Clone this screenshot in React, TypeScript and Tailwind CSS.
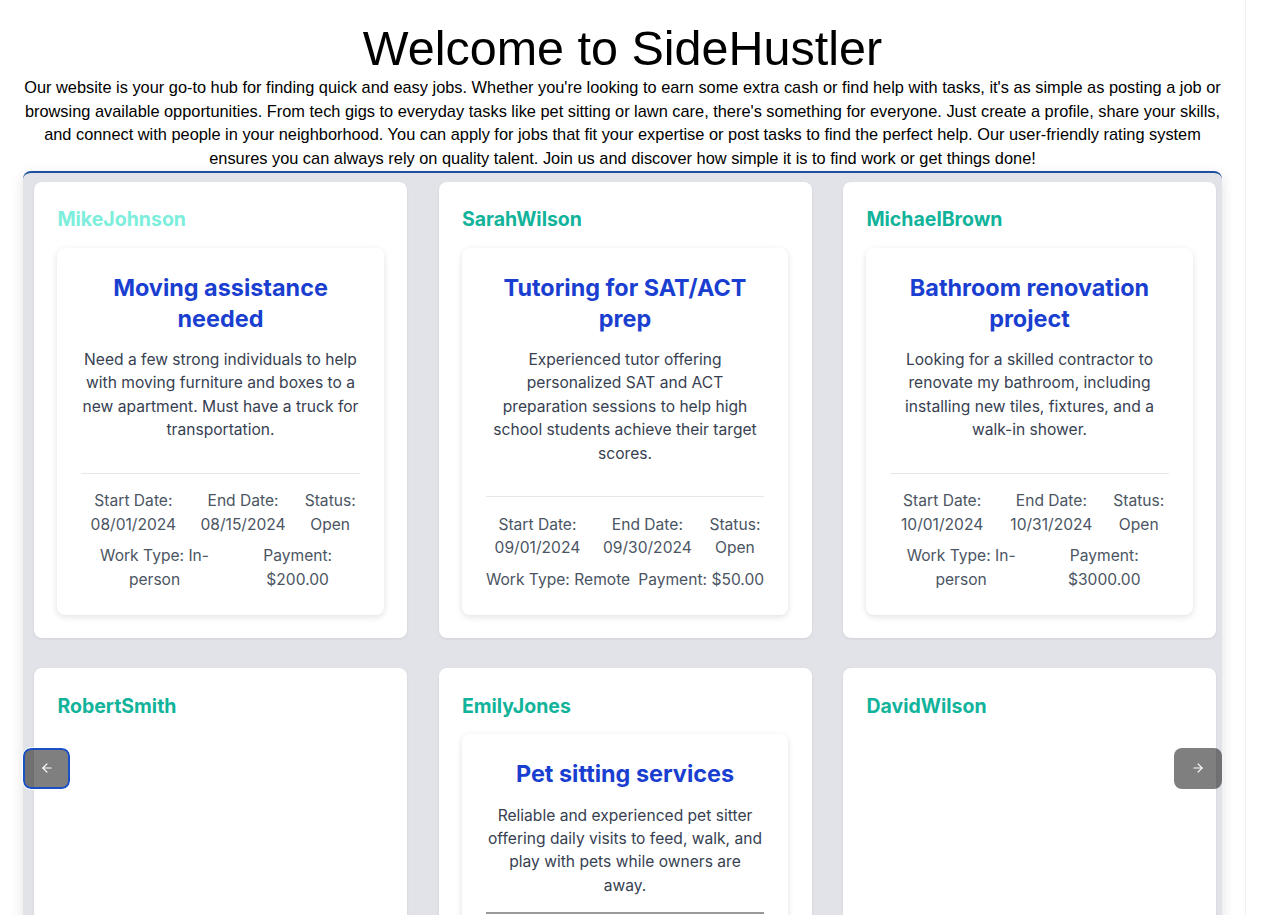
import { ArrowLeft, ArrowRight } from "lucide-react";

type Job = {
  title: string;
  description: string;
  startDate: string;
  endDate: string;
  status: string;
  workType: string;
  payment: string;
};

type Poster = {
  username: string;
  job?: Job;
  highlight?: boolean;
};

const posters: Poster[] = [
  {
    username: "MikeJohnson",
    highlight: true,
    job: {
      title: "Moving assistance needed",
      description:
        "Need a few strong individuals to help with moving furniture and boxes to a new apartment. Must have a truck for transportation.",
      startDate: "08/01/2024",
      endDate: "08/15/2024",
      status: "Open",
      workType: "In-person",
      payment: "$200.00",
    },
  },
  {
    username: "SarahWilson",
    job: {
      title: "Tutoring for SAT/ACT prep",
      description:
        "Experienced tutor offering personalized SAT and ACT preparation sessions to help high school students achieve their target scores.",
      startDate: "09/01/2024",
      endDate: "09/30/2024",
      status: "Open",
      workType: "Remote",
      payment: "$50.00",
    },
  },
  {
    username: "MichaelBrown",
    job: {
      title: "Bathroom renovation project",
      description:
        "Looking for a skilled contractor to renovate my bathroom, including installing new tiles, fixtures, and a walk-in shower.",
      startDate: "10/01/2024",
      endDate: "10/31/2024",
      status: "Open",
      workType: "In-person",
      payment: "$3000.00",
    },
  },
  { username: "RobertSmith" },
  {
    username: "EmilyJones",
    job: {
      title: "Pet sitting services",
      description:
        "Reliable and experienced pet sitter offering daily visits to feed, walk, and play with pets while owners are away.",
      startDate: "08/10/2024",
      endDate: "08/20/2024",
      status: "Open",
      workType: "In-person",
      payment: "$25.00",
    },
  },
  { username: "DavidWilson" },
];

function JobCard({ job, dark }: { job: Job; dark?: boolean }) {
  return (
    <div className="bg-white rounded-lg shadow-[0_2px_6px_rgba(0,0,0,0.12)] p-6 text-center">
      <h3 className="text-[23.4px] leading-[31.2px] font-bold text-[#1a3fd0] mb-[14px]">
        {job.title}
      </h3>
      <p
        className={`text-[15.6px] leading-[23.4px] text-[#374151] ${
          dark ? "mb-[15px]" : "mb-[31px]"
        }`}
      >
        {job.description}
      </p>
      <div
        className={
          dark
            ? "border-t-2 border-[#9a9a9a] pt-[15.6px]"
            : "border-t border-[#e5e7eb] pt-[15.6px]"
        }
      >
        <div className="flex justify-between gap-2 text-[15.6px] leading-[23.4px] text-[#4b5563]">
          <span>Start Date: {job.startDate}</span>
          <span>End Date: {job.endDate}</span>
          <span>Status: {job.status}</span>
        </div>
        <div className="flex justify-between gap-2 mt-[8px] text-[15.6px] leading-[23.4px] text-[#4b5563]">
          <span>Work Type: {job.workType}</span>
          <span>Payment: {job.payment}</span>
        </div>
      </div>
    </div>
  );
}

function PosterCard({ poster }: { poster: Poster }) {
  return (
    <div className="bg-white rounded-lg shadow-[0_1px_3px_rgba(0,0,0,0.08)] p-[23.4px] min-h-[455px]">
      <h2
        className={`text-[19.5px] leading-[28px] font-bold mb-[14.6px] ${
          poster.highlight ? "text-[#7eeedc]" : "text-[#12b39b]"
        }`}
      >
        {poster.username}
      </h2>
      {poster.job && (
        <JobCard job={poster.job} dark={poster.username === "EmilyJones"} />
      )}
    </div>
  );
}

export default function App() {
  return (
    <div className="w-[1246px] min-h-screen bg-white border-r border-[#f1f1f3] px-[23px] font-['Inter',sans-serif]">
      <h1 className="pt-[22px] text-center text-[48.5px] leading-[52px] font-normal text-black font-['Liberation_Sans',Arial,sans-serif]">
        Welcome to SideHustler
      </h1>
      <p className="mt-[2px] text-center text-[16.38px] leading-[23.67px] text-black font-['Liberation_Sans',Arial,sans-serif]">
        Our website is your go-to hub for finding quick and easy jobs. Whether
        you're looking to earn some extra cash or find help with tasks, it's as
        simple as posting a job or browsing available opportunities. From tech
        gigs to everyday tasks like pet sitting or lawn care, there's something
        for everyone. Just create a profile, share your skills, and connect
        with people in your neighborhood. You can apply for jobs that fit your
        expertise or post tasks to find the perfect help. Our user-friendly
        rating system ensures you can always rely on quality talent. Join us
        and discover how simple it is to find work or get things done!
      </p>

      <div className="relative w-[1199px] bg-[#e2e3e8] border-t-2 border-[#1d4f9e] rounded-t-lg shadow-[0_4px_14px_rgba(0,0,0,0.12)] pl-[11px] pr-[6px] pt-[9px] pb-[11px]">
        <div className="grid grid-cols-[373px_373px_373px] gap-x-[31.5px] gap-y-[30px]">
          {posters.map((p) => (
            <PosterCard key={p.username} poster={p} />
          ))}
        </div>

        <button className="absolute left-0 top-[575px] w-[47px] h-[41px] flex items-center justify-center rounded-lg bg-black/50 border-2 border-[#1a4fc5] outline outline-1 outline-white text-white">
          <ArrowLeft size={14} strokeWidth={2} />
        </button>
        <button className="absolute right-0 top-[575px] w-[48px] h-[41px] flex items-center justify-center rounded-lg bg-black/50 text-white">
          <ArrowRight size={14} strokeWidth={2} />
        </button>
      </div>
    </div>
  );
}
